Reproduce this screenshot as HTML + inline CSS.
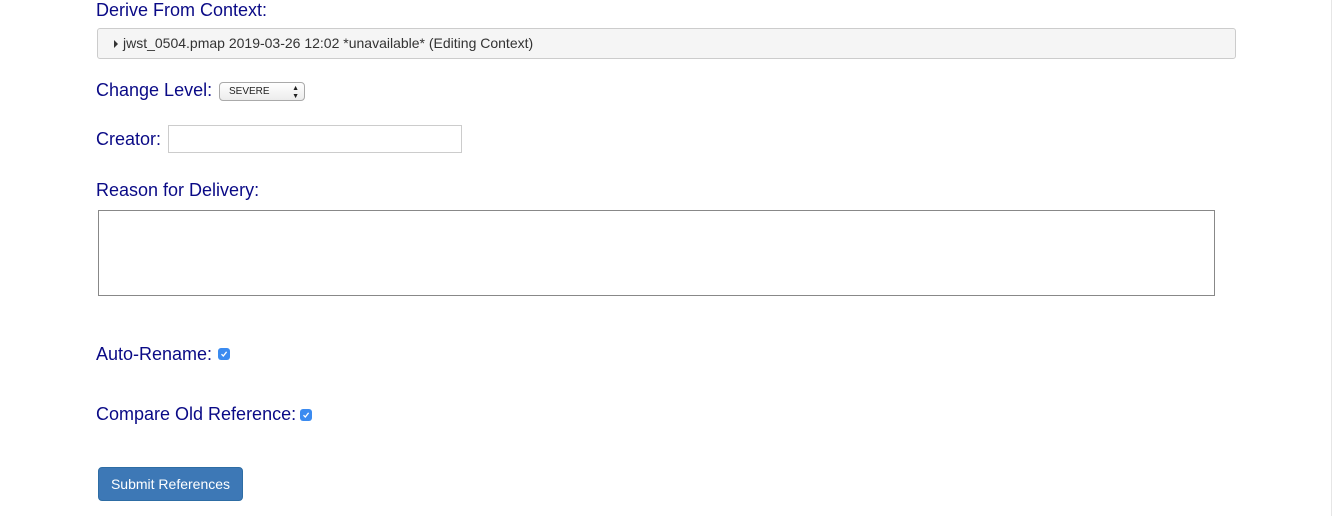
<!DOCTYPE html>
<html><head><style>
body{margin:0;width:1334px;height:516px;background:#fff;position:relative;font-family:"Liberation Sans",Arial,sans-serif;overflow:hidden}
.l{position:absolute;left:96px;color:#0a0a86;font-size:18px;line-height:20px;white-space:nowrap}
.a{position:absolute;box-sizing:border-box}
.cb{position:absolute;width:12px;height:12px;background:#3b8bf0;border-radius:3px;box-sizing:border-box}
.cb svg{position:absolute;left:2px;top:2px}
</style></head><body>
<div class="a" style="left:1331px;top:0;width:1px;height:516px;background:#e6e6e6"></div>
<div class="l" style="top:0">Derive From Context:</div>
<div class="a" style="left:97px;top:28px;width:1139px;height:31px;background:#f5f5f5;border:1px solid #ccc;border-radius:3px"></div>
<div class="a" style="left:114px;top:40px;width:0;height:0;border-top:4px solid transparent;border-bottom:4px solid transparent;border-left:4px solid #333"></div>
<div class="a" style="left:123px;top:35px;font-size:14px;line-height:17px;color:#333;white-space:nowrap">jwst_0504.pmap 2019-03-26 12:02 *unavailable* (Editing Context)</div>
<div class="l" style="top:80px">Change Level:</div>
<div class="a" style="left:219px;top:82px;width:86px;height:19px;border:1px solid #aaa;border-radius:4px;background:linear-gradient(#fff,#ececec);font-size:10px;line-height:17px;padding-left:9px;color:#222">SEVERE<span style="position:absolute;right:5px;top:0;font-size:7px;line-height:8px;top:2px">▲<br>▼</span></div>
<div class="l" style="top:129px">Creator:</div>
<div class="a" style="left:168px;top:125px;width:294px;height:28px;border:1px solid #ccc"></div>
<div class="l" style="top:180px">Reason for Delivery:</div>
<div class="a" style="left:98px;top:210px;width:1117px;height:86px;border:1px solid #888"></div>
<div class="l" style="top:344px">Auto-Rename:</div>
<div class="cb" style="left:218px;top:348px"><svg width="8" height="8"><path d="M1.5 4.2L3.3 6 6.6 1.8" stroke="#fff" stroke-width="1.3" fill="none"/></svg></div>
<div class="l" style="top:404px">Compare Old Reference:</div>
<div class="cb" style="left:300px;top:409px"><svg width="8" height="8"><path d="M1.5 4.2L3.3 6 6.6 1.8" stroke="#fff" stroke-width="1.3" fill="none"/></svg></div>
<div class="a" style="left:98px;top:467px;width:145px;height:34px;background:#3d78b6;border:1px solid #2e6da4;border-radius:4px;color:#fff;font-size:14px;line-height:32px;text-align:center">Submit References</div>
</body></html>
